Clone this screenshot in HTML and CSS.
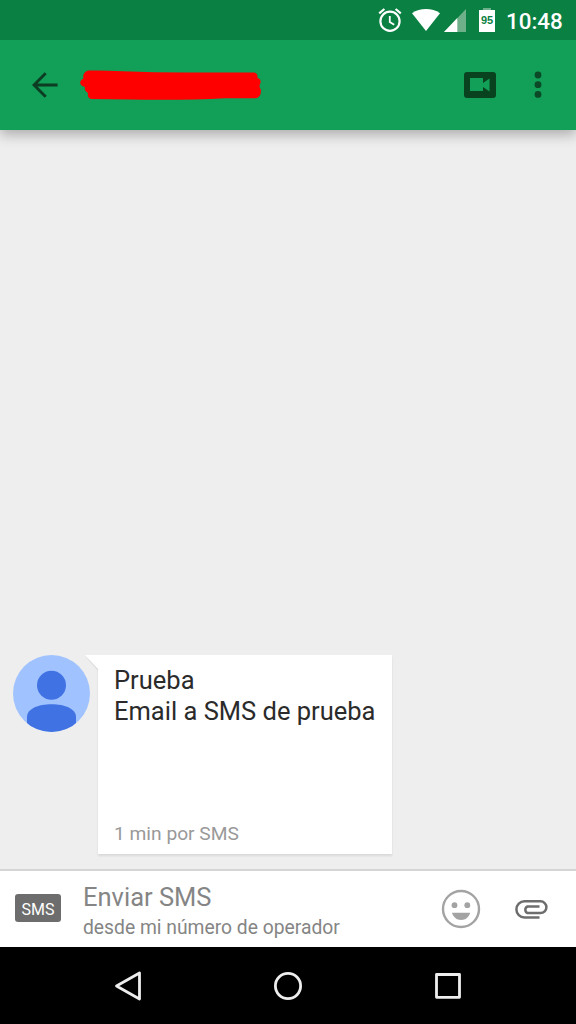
FILE: index.html
```html
<!DOCTYPE html>
<html lang="es">
<head>
<meta charset="utf-8">
<title>Mensajes</title>
<link rel="stylesheet" href="styles.css">
</head>
<body>
<div class="screen">
  <div class="status-bar">
    <svg class="alarm" width="24" height="26" viewBox="0 0 24 26" fill="none" stroke="#fff" stroke-width="2.2">
      <circle cx="12" cy="14.3" r="9.6"/>
      <path d="M1.2 6.3 6.4 2M22.8 6.3 17.6 2"/>
      <path d="M11.8 9v6l4.4 2.8" stroke-width="1.8"/>
    </svg>
    <svg class="wifi" width="28" height="22" viewBox="0 0 28 22"><path fill="#fff" d="M0 4.2C8-1.3 20-1.3 28 4.2L14 22Z"/></svg>
    <svg class="signal" width="22" height="23" viewBox="0 0 22 23"><path fill="#6db089" d="M22 0V23H0Z"/><path fill="#fff" d="M13.3 9V23H0Z"/></svg>
    <div class="battery">95</div>
    <div class="clock">10:48</div>
  </div>
  <header class="app-bar">
    <svg class="back" width="26" height="26" viewBox="0 0 26 26" fill="none" stroke="#0c3d23" stroke-width="2.9"><path d="M13.7 1.2 2 13 13.7 24.8M2 13H25.6"/></svg>
    <svg class="redaction" width="182" height="31" viewBox="0 0 182 31"><path fill="#f00" d="M8 .6Q22 .2 43 1.2Q75 2.6 105 2.6L174 2.6Q178 3 177.500 8Q182 9 180 14.500Q178.500 16 181 20Q181 28 175 28.3L145 28.3Q105 30.5 50 29.6L11 29Q7 28 8 23Q4 21 5 17Q0 16 .2 12Q1 9 3.5 8.5Q2 3 8 .6Z"/></svg>
    <svg class="video" width="32" height="26" viewBox="0 0 32 26"><rect width="32" height="26" rx="3" fill="#09421f"/><path fill="#129f58" d="M6 6H19V11L25.5 6.5V19.5L19 15V19H6Z"/></svg>
    <svg class="more" width="8" height="28" viewBox="0 0 8 28" fill="#0b4927"><circle cx="4" cy="4" r="3.4"/><circle cx="4" cy="13.7" r="3.4"/><circle cx="4" cy="23.4" r="3.4"/></svg>
  </header>
  <main class="conversation">
    <svg class="avatar" width="77" height="77" viewBox="0 0 77 77">
      <defs><clipPath id="disc"><circle cx="38.5" cy="38.5" r="38.5"/></clipPath></defs>
      <circle cx="38.5" cy="38.5" r="38.5" fill="#a0c3ff"/>
      <circle cx="38.5" cy="30.3" r="14.5" fill="#4072e4"/>
      <path clip-path="url(#disc)" fill="#4072e4" d="M14 77V62C14 54 25 49.3 38.5 49.3S63 54 63 62V77Z"/>
    </svg>
    <div class="bubble">
      <svg class="tail" width="13" height="16" viewBox="0 0 13 16"><path fill="#dcdcdc" d="M0 1 13 16V12Z"/><path fill="#fff" d="M0 0H13V14Z"/></svg>
      <p class="message">Prueba<br>Email a SMS de prueba</p>
      <p class="meta">1 min por SMS</p>
    </div>
  </main>
  <footer class="composer">
    <div class="sms-badge">SMS</div>
    <div class="compose-text">
      <div class="hint">Enviar SMS</div>
      <div class="from">desde mi número de operador</div>
    </div>
    <svg class="smile" width="40" height="40" viewBox="0 0 40 40" fill="#a3a3a3">
      <circle cx="20" cy="20" r="18" fill="none" stroke="#a3a3a3" stroke-width="2.4"/>
      <circle cx="13.5" cy="16.2" r="2.9"/><circle cx="26.3" cy="16.2" r="2.9"/>
      <path d="M11 23.8H29.2C27.8 28.5 24.6 31 20.1 31S12.4 28.5 11 23.8Z"/>
    </svg>
    <svg class="clip" width="33" height="20" viewBox="0 0 33 20" fill="none" stroke="#6d6d6d" stroke-width="2.5">
      <path d="M24.5 17.5H9.500A8.100 8.100 0 0 1 9.500 1.300H25.500A5.900 5.900 0 0 1 25.500 13.100H12.500A3.600 3.600 0 0 1 12.500 6.500H24.500"/>
    </svg>
  </footer>
  <nav class="nav-bar">
    <svg width="30" height="32" viewBox="0 0 30 32" fill="none" stroke="#eee" stroke-width="2.8" stroke-linejoin="round"><path d="M26.5 3V29L3.5 16Z"/></svg>
    <svg width="30" height="32" viewBox="0 0 30 32" fill="none" stroke="#eee" stroke-width="2.8"><circle cx="15" cy="16" r="12.6"/></svg>
    <svg width="30" height="32" viewBox="0 0 30 32" fill="none" stroke="#eee" stroke-width="2.8" stroke-linejoin="round"><path d="M3.5 4.5H26.5V27.3H3.5Z"/></svg>
  </nav>
</div>
</body>
</html>
```
FILE: styles.css
```css
* { box-sizing: border-box; }
body { margin: 0; font-family: Roboto, "Noto Sans", sans-serif; }
p { margin: 0; }
svg { display: block; flex: none; }
.screen { width: 576px; height: 1024px; display: flex; flex-direction: column; overflow: hidden; background: #eee; }

.status-bar { position: relative; z-index: 2; height: 40px; flex: none; display: flex; align-items: flex-start; padding-left: 378px; background: #0b8043; color: #fff; }
.alarm { margin-top: 7px; }
.wifi { margin: 9px 0 0 10px; }
.signal { margin: 9px 0 0 4px; }
.battery {
  width: 16px; height: 24px; margin: 8px 0 0 13px; padding-top: 2px;
  background: linear-gradient(#6db089, #6db089) 4px 0 / 8px 2px no-repeat, linear-gradient(#fff, #fff) 0 2px / 16px 22px no-repeat;
  color: #0b8043; font: bold 11px/21px "Liberation Sans", sans-serif; text-align: center;
}
.clock { margin: 8px 0 0 11px; font-size: 22.4px; line-height: 26px; font-weight: 500; white-space: nowrap; }

.app-bar { position: relative; z-index: 1; height: 90px; flex: none; display: flex; align-items: flex-start; padding-left: 32px; background: #129f58; box-shadow: 0 5px 12px rgba(0, 0, 0, .27); }
.back { margin-top: 32px; }
.redaction { margin: 30px 0 0 22px; }
.video { margin: 32px 0 0 202px; }
.more { margin: 31px 0 0 37.5px; }

.conversation { flex: 1; display: flex; align-items: flex-end; padding: 0 0 15px 13px; }
.avatar { margin-bottom: 122px; }
.bubble { position: relative; width: 293.500px; height: 199px; margin-left: 8px; padding: 10px 16px 8px; display: flex; flex-direction: column; justify-content: space-between; background: #fff; box-shadow: 0 2px 2px rgba(0, 0, 0, .09); }
.tail { position: absolute; left: -13px; top: 0; }
.message { color: #2b2b2b; font-size: 25.5px; line-height: 31px; white-space: nowrap; }
.meta { color: #999; font-size: 19.2px; line-height: 24px; }

.composer { height: 78px; flex: none; display: flex; align-items: flex-start; padding-left: 15px; background: #fff; border-top: 2px solid #d5d5d5; }
.sms-badge { width: 46px; height: 28px; margin-top: 23px; border-radius: 3px; background: #6d6d6d; color: #fff; font-size: 16px; line-height: 31px; text-align: center; }
.compose-text { width: 358px; margin: 10px 0 0 22px; color: #858585; white-space: nowrap; }
.hint { font-size: 25.5px; line-height: 32px; }
.from { font-size: 19.3px; line-height: 30px; }
.smile { margin-top: 18px; }
.clip { margin: 29px 0 0 34px; }

.nav-bar { height: 77px; flex: none; display: flex; justify-content: space-between; align-items: center; padding: 0 113px; background: #000; }
```
